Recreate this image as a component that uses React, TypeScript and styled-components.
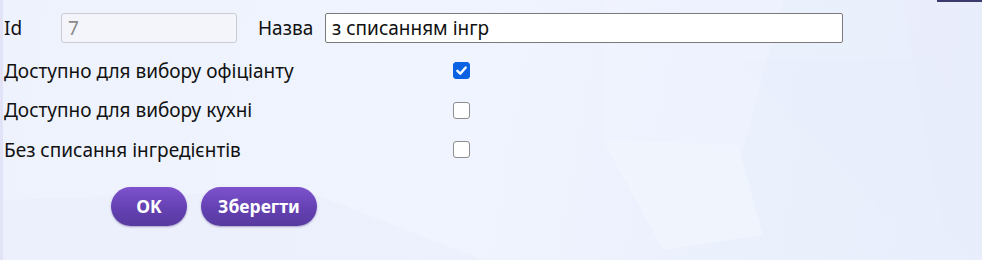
import React, { useState } from 'react';
import styled, { createGlobalStyle } from 'styled-components';

const GlobalStyle = createGlobalStyle`
  html, body {
    margin: 0;
    padding: 0;
    background: #edf1fc;
  }
  body {
    font-family: 'Noto Sans', 'Open Sans', sans-serif;
    color: #111;
  }
`;

const Page = styled.div`
  position: relative;
  width: 982px;
  height: 260px;
  overflow: hidden;
  box-sizing: border-box;
  border-left: 3px solid #e2e3f6;
  background: linear-gradient(100deg, #eef2fd 0%, #f0f4fe 45%, #ebf0fd 75%, #e9eefc 100%);
`;

const Backdrop = styled.svg`
  position: absolute;
  inset: 0;
  pointer-events: none;
`;

const TopEdge = styled.div`
  position: absolute;
  top: 0;
  right: 0;
  width: 45px;
  height: 2px;
  background: #3d3a6e;
`;

const Form = styled.div`
  position: relative;
  display: flex;
  flex-direction: column;
  padding: 13px 0 0 1px;
`;

const HeaderRow = styled.div`
  display: flex;
  align-items: center;
  height: 30px;
`;

const Label = styled.label<{ $width?: number; $gap?: number }>`
  font-size: 19px;
  width: ${(p) => (p.$width ? `${p.$width}px` : 'auto')};
  margin-left: ${(p) => p.$gap ?? 0}px;
  flex-shrink: 0;
`;

const TextInput = styled.input<{ $width: number }>`
  box-sizing: border-box;
  width: ${(p) => p.$width}px;
  height: 30px;
  padding: 0 6px;
  font-family: 'Noto Sans', sans-serif;
  font-size: 19px;
  color: #111;
  background: #fff;
  border: 1px solid #7a7a7a;
  border-radius: 2px;
  outline: none;

  &:disabled {
    color: #8a8a8a;
    background: #f3f5fb;
    border-color: #c9ccd3;
    border-radius: 3px;
  }
`;

const OptionList = styled.div`
  display: flex;
  flex-direction: column;
  margin-top: 8px;
`;

const OptionRow = styled.label`
  display: grid;
  grid-template-columns: 449px 17px;
  align-items: center;
  height: 39.5px;
  font-size: 19px;
`;

const Box = styled.span<{ $checked: boolean }>`
  box-sizing: border-box;
  width: 17px;
  height: 17px;
  border-radius: 3px;
  border: 1px solid ${(p) => (p.$checked ? '#0b63e4' : '#8d8d8d')};
  background: ${(p) => (p.$checked ? '#0b63e4' : '#fff')};
  display: flex;
  align-items: center;
  justify-content: center;
  cursor: pointer;
`;

const Actions = styled.div`
  display: flex;
  gap: 14px;
  margin-top: 17px;
  padding-left: 107px;
`;

const PillButton = styled.button`
  min-width: 76px;
  height: 39px;
  padding: 0 17px;
  border: none;
  border-radius: 20px;
  background: linear-gradient(180deg, #7d52cc 0%, #6441b3 55%, #573a9f 100%);
  box-shadow: 0 1px 2px rgba(40, 20, 90, 0.35);
  color: #fff;
  font-family: 'Noto Sans', sans-serif;
  font-weight: 700;
  font-size: 17.5px;
  cursor: pointer;
`;

const options = [
  { label: 'Доступно для вибору офіціанту', checked: true },
  { label: 'Доступно для вибору кухні', checked: false },
  { label: 'Без списання інгредієнтів', checked: false },
];

function Check({ checked, onToggle }: { checked: boolean; onToggle: () => void }) {
  return (
    <Box $checked={checked} onClick={onToggle}>
      {checked && (
        <svg width="13" height="13" viewBox="0 0 12 12">
          <path d="M2.2 6.3 L4.9 8.9 L9.9 3.3" fill="none" stroke="#fff" strokeWidth="2.2" strokeLinecap="round" strokeLinejoin="round" />
        </svg>
      )}
    </Box>
  );
}

export default function App() {
  const [flags, setFlags] = useState(options.map((o) => o.checked));
  const [name, setName] = useState('з списанням інгр');

  return (
    <Page>
      <GlobalStyle />
      <Backdrop width="982" height="260" viewBox="0 0 982 260">
        <polygon points="600,140 735,145 760,235 660,250" fill="#f4f7fe" opacity="0.5" />
        <polygon points="735,60 930,60 980,200 880,210" fill="#e8edfc" opacity="0.5" />
        <polygon points="600,0 780,0 740,150 600,140" fill="#f2f5fe" opacity="0.4" />
        <polygon points="0,200 300,190 480,260 0,260" fill="#e9edfb" opacity="0.5" />
        <polygon points="900,0 982,0 982,260 940,230" fill="#e7ecfb" opacity="0.5" />
      </Backdrop>
      <TopEdge />
      <Form>
        <HeaderRow>
          <Label $width={57}>Id</Label>
          <TextInput $width={176} value="7" disabled readOnly />
          <Label $gap={21} $width={67}>Назва</Label>
          <TextInput $width={518} value={name} onChange={(e) => setName(e.target.value)} />
        </HeaderRow>
        <OptionList>
          {options.map((o, i) => (
            <OptionRow key={o.label}>
              <span>{o.label}</span>
              <Check
                checked={flags[i]}
                onToggle={() => setFlags((f) => f.map((v, j) => (j === i ? !v : v)))}
              />
            </OptionRow>
          ))}
        </OptionList>
        <Actions>
          <PillButton>OK</PillButton>
          <PillButton>Зберегти</PillButton>
        </Actions>
      </Form>
    </Page>
  );
}
